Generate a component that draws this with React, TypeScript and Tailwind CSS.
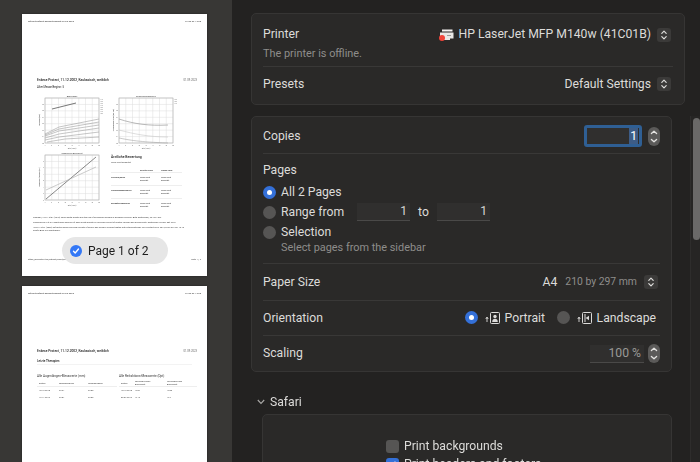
import React from "react";

const FONT = "font-['Roboto','Liberation_Sans',sans-serif]";

function Stepper({ tall }: { tall?: boolean }) {
  if (tall) {
    return (
      <div className="w-[12px] h-[19px] rounded-full bg-[#5b5a59] flex items-center justify-center shrink-0">
        <svg width="12" height="19" viewBox="0 0 12 19" fill="none" stroke="#e4e3e1" strokeWidth="1.3" strokeLinecap="round" strokeLinejoin="round">
          <path d="M3.4 6.6 6 4.2l2.6 2.4" />
          <path d="M3.4 12.4 6 14.8l2.6-2.4" />
        </svg>
      </div>
    );
  }
  return (
    <div className="w-[14px] h-[14px] rounded-[3px] bg-[#3b3a39] flex items-center justify-center shrink-0">
      <svg width="14" height="14" viewBox="0 0 14 14" fill="none" stroke="#dedddb" strokeWidth="1.2" strokeLinecap="round" strokeLinejoin="round">
        <path d="M4.8 5.400 7 3.200l2.200 2.200" />
        <path d="M4.8 8.600 7 10.800l2.200-2.200" />
      </svg>
    </div>
  );
}

function Radio({ on }: { on?: boolean }) {
  return on ? (
    <span className="w-[13px] h-[13px] rounded-full bg-[#3470d8] flex items-center justify-center shrink-0">
      <span className="w-[5px] h-[5px] rounded-full bg-white" />
    </span>
  ) : (
    <span className="w-[13px] h-[13px] rounded-full bg-[#565554] shrink-0" />
  );
}

function Divider() {
  return <div className="h-px bg-[#393837]" />;
}

function SmallField({ children, w }: { children: React.ReactNode; w: string }) {
  return (
    <div className={`${w} h-[18px] bg-[#302f2e] border-b border-[#4a4948] flex items-center justify-end pr-[3px] text-[#d6d5d3]`}>
      {children}
    </div>
  );
}

function OrientIcon({ landscape }: { landscape?: boolean }) {
  return (
    <svg width="16" height="14" viewBox="0 0 16 14" fill="none" className="shrink-0">
      <path d="M2 11V6.500M.8 8 2 6l1.200 2" stroke="#dcdbd9" strokeWidth="0.9" />
      <rect x="5.500" y="1.500" width="9" height="11" rx="1" stroke="#dcdbd9" strokeWidth="1" />
      {landscape ? (
        <>
          <path d="M8 3v8" stroke="#dcdbd9" strokeWidth="1" />
          <path d="M8.600 7l3.400-2.200v4.400z" fill="#dcdbd9" />
        </>
      ) : (
        <>
          <circle cx="10" cy="5.500" r="1.700" fill="#dcdbd9" />
          <path d="M7.200 11c0-2.400 1.200-3.200 2.800-3.200s2.800.8 2.800 3.200z" fill="#dcdbd9" />
        </>
      )}
    </svg>
  );
}

const TITLES = { length: "Augenlänge", growth: "Augenlängenzuwachs", sphere: "Sphärisches Äquivalent" };
const YLABELS = { length: "Augenlänge (mm)", growth: "Augenlängenzuwachs (mm/Jahr)", sphere: "Sphärisches Äquivalent (Dpt)" };

function Chart({ kind }: { kind: "length" | "growth" | "sphere" }) {
  const vert = [0, 1, 2, 3, 4, 5, 6, 7, 8].map((i) => (i * 54) / 8);
  const horiz = [0, 1, 2, 3, 4, 5, 6, 7].map((i) => (i * 45) / 7);
  return (
    <svg width="66" height="55" viewBox="-9 -2 66 55" className="shrink-0 overflow-visible">
      {vert.map((x) => (
        <line key={x} x1={x} x2={x} y1="0" y2="45" stroke="#dddddd" strokeWidth="0.5" />
      ))}
      {horiz.map((y) => (
        <line key={y} x1="0" x2="54" y1={y} y2={y} stroke="#dddddd" strokeWidth="0.5" />
      ))}
      <rect x="0" y="0" width="54" height="45" fill="none" stroke="#b0b0b0" strokeWidth="0.6" />
      {kind === "length" && (
        <g fill="none" stroke="#8d8d8d" strokeWidth="0.5">
          <path d="M7 11 31 5" stroke="#555" strokeWidth="0.8" />
          <path d="M0 36 14 29 54 21" />
          <path d="M0 37 14 31 54 24" />
          <path d="M0 38 14 33 54 27" />
          <path d="M0 40 14 36 54 30" />
          <path d="M0 42 14 39 54 34" />
          <path d="M2 44 20 41 54 39" />
        </g>
      )}
      {kind === "growth" && (
        <g fill="none" stroke="#a5a5a5" strokeWidth="0.6">
          <path d="M0 21C15 26 30 28 49 27" stroke="#8c8c8c" />
          <path d="M0 32C15 36 30 39 49 39" stroke="#c8c8c8" />
          <path d="M0 40C10 42 20 44 49 45" />
        </g>
      )}
      {kind === "sphere" && (
        <g fill="none" strokeWidth="0.6">
          <path d="M1 44 51 2" stroke="#555" strokeWidth="0.7" />
          <path d="M1 35 51 12" stroke="#aaa" />
        </g>
      )}
      <text x="27" y="-0.6" fontSize="2" textAnchor="middle" fill="#444">
        {TITLES[kind]}
      </text>
      <text x="27" y="50.500" fontSize="1.500" textAnchor="middle" fill="#666">
        Alter (Jahre)
      </text>
      {horiz.slice(1).map((y, i) => (
        <text key={y} x="-1" y={y + 0.6} fontSize="1.500" textAnchor="end" fill="#666">
          {kind === "sphere" ? `${i - 3}` : `${26 - i}`}
        </text>
      ))}
      {vert.map((x, i) => (
        <text key={x} x={x} y="47.500" fontSize="1.500" textAnchor="middle" fill="#666">
          {i * 2 + 4}
        </text>
      ))}
      <text transform="translate(-5 22) rotate(-90)" fontSize="1.500" textAnchor="middle" fill="#666">
        {YLABELS[kind]}
      </text>
      {kind !== "sphere" && (
        <g fontSize="1.300" fill="#777">
          {[2, 4, 6, 8, 10, 12, 14, 16].slice(0, kind === "length" ? 8 : 3).map((y, i) => (
            <text key={y} x="55.500" y={y}>
              {kind === "length" ? `P${(i + 1) * 10}` : `P${(i + 1) * 25}`}
            </text>
          ))}
        </g>
      )}
    </svg>
  );
}

function Tiny({ children, className = "" }: { children: React.ReactNode; className?: string }) {
  return <div className={`whitespace-nowrap ${className}`}>{children}</div>;
}

function PageHeader() {
  return (
    <div className="flex justify-between text-[2.400px] leading-[4px] text-[#333] px-[6px] pt-[6px]">
      <Tiny>geführt.geführt.gesamt.gesamt.22.02.2023</Tiny>
      <Tiny>01.09.23 12:30</Tiny>
    </div>
  );
}

function PageTitle() {
  return (
    <div className="flex justify-between items-center pl-[15px] pr-[10px]">
      <Tiny className="text-[3.250px] leading-[6px] text-[#222] font-medium">Enkese Protect, 11.12.2002, Kaukasisch, weiblich</Tiny>
      <Tiny className="text-[2.700px] leading-[6px] text-[#666]">01.09.2023</Tiny>
    </div>
  );
}

const REVIEW = ["Tierrund/Kurve", "Augenlängenzuwachs", "Refraktionszuwachs"];

function FirstPage() {
  return (
    <div className="relative w-[185px] h-[262px] bg-white shrink-0 shadow-[0_0_2px_rgba(0,0,0,0.4)]">
      <PageHeader />
      <div className="h-[53px]" />
      <PageTitle />
      <Tiny className="px-[15px] text-[2.800px] leading-[4px] mt-[2px] text-[#222]">Alter Messe Beginn: 5</Tiny>
      <div className="flex gap-[8px] pl-[14px] mt-[7px] h-[55px]">
        <Chart kind="length" />
        <Chart kind="growth" />
      </div>
      <div className="flex pl-[14px] mt-[2px]">
        <Chart kind="sphere" />
        <div className="ml-[9px] mt-[2px] w-[70px] text-[#444]">
          <Tiny className="text-[3.400px] leading-[5px] text-[#222] font-medium">Ärztliche Bewertung</Tiny>
          <Tiny className="text-[2.200px] leading-[5px]">Noch nicht bewertet</Tiny>
          <div className="grid grid-cols-[29px_21px_21px] text-[2.100px] leading-[3.200px] mt-[4px] text-[#333]">
            <span className="pb-[2.400px]" />
            <span className="font-semibold">Rechtes Auge</span>
            <span className="font-semibold">Linkes Auge</span>
            {REVIEW.map((label) => (
              <React.Fragment key={label}>
                <span className="pt-[2.500px] h-[13px] border-t border-[#eeeeee] font-semibold">{label}</span>
                <span className="pt-[2.500px] h-[13px] border-t border-[#eeeeee]">Noch nicht<br />bewertet</span>
                <span className="pt-[2.500px] h-[13px] border-t border-[#eeeeee]">Noch nicht<br />bewertet</span>
              </React.Fragment>
            ))}
          </div>
        </div>
      </div>
      <div className="pl-[11px] mt-[5px] text-[2.150px] leading-[3px] text-[#444]">
        <Tiny>Tideman, J.W.L. et al. (2018). Axial length growth and the risk of developing myopia in European children. Acta Ophthalmol, 96: 301-309.</Tiny>
        <Tiny className="mt-[2px]">Truckenbrod C et al. Longitudinal analysis of axial length growth in a German cohort of healthy children and adolescents. Ophthalmic Physiol Opt. 2021</Tiny>
        <Tiny className="mt-[2px]">Hsu CH et al. (2020) Refractive power and axial growth of school-age myopic children treated with orthokeratology. Eye Contact Lens. 2019;45:29-35. doi: 10.10</Tiny>
        <Tiny>Graefe Arch Clin Ophthalmol.</Tiny>
      </div>
      <div className="flex justify-between text-[2.200px] leading-[3px] text-[#444] px-[6px] mt-[26px]">
        <Tiny>https://eyeprotect.ch/patient/report/print</Tiny>
        <Tiny>Seite 1 / 2</Tiny>
      </div>
      {/* Selected-page pill */}
      <div className="absolute left-[40px] top-[223px] w-[106px] h-[27px] rounded-full bg-[#e6e6e6] flex items-center pl-[8px] gap-[6px]">
        <span className="w-[12px] h-[12px] rounded-full bg-[#3478f6] flex items-center justify-center">
          <svg width="8" height="8" viewBox="0 0 8 8" fill="none" stroke="white" strokeWidth="1.300" strokeLinecap="round" strokeLinejoin="round">
            <path d="M1.500 4.200 3.200 6 6.500 2" />
          </svg>
        </span>
        <span className="text-[12px] text-[#1d1d1d] whitespace-nowrap">Page 1 of 2</span>
      </div>
    </div>
  );
}

function SecondPage() {
  const cell = "text-[2.200px] leading-[3px] text-[#444]";
  return (
    <div className="w-[185px] h-[262px] bg-white shrink-0 shadow-[0_0_2px_rgba(0,0,0,0.4)]">
      <PageHeader />
      <div className="h-[52px]" />
      <PageTitle />
      <Tiny className="px-[15px] mt-[4.500px] text-[3px] leading-[5px] text-[#222] font-medium">Letzte Therapien</Tiny>
      <div className="mx-[15px] h-px bg-[#f3f3f3]" />
      <div className="flex px-[15px] mt-[9px] gap-[2px]">
        <div className="w-[80px]">
          <Tiny className="text-[3.100px] leading-[5px] text-[#333]">Alle Augenlängen-Messwerte (mm)</Tiny>
          <div className={`grid grid-cols-[20px_29px_29px] pl-[2px] mt-[3px] ${cell}`}>
            <span className="pb-[1px]">Datum</span>
            <span>RA Augenlänge</span>
            <span>LA Augenlänge</span>
            <span className="col-span-3 h-px bg-[#eeeeee] -ml-[2px] mb-[2px]" />
            <span>18.12.2018</span><span>23.61</span><span>23.86</span>
            <span className="col-span-3 h-[4px]" />
            <span>12.11.2019</span><span>23.81</span><span>23.86</span>
          </div>
        </div>
        <div className="w-[76px]">
          <Tiny className="text-[3.100px] leading-[5px] text-[#333]">Alle Refraktions-Messwerte (Dpt)</Tiny>
          <div className={`grid grid-cols-[14px_32px_30px] items-end pl-[2px] mt-[1px] ${cell}`}>
            <span className="pb-[1px]">Datum</span>
            <span>RA Sphärisches<br />Äquivalent</span>
            <span>LA Sphärisches<br />Äquivalent</span>
            <span className="col-span-3 h-px bg-[#eeeeee] -ml-[2px] mb-[2px]" />
            <span>18.12.2018</span><span>-0.87</span><span>-0.80</span>
            <span className="col-span-3 h-[4px]" />
            <span>06.07.2019</span><span>-0.12</span><span>-0.2</span>
          </div>
        </div>
      </div>
    </div>
  );
}

export default function App() {
  return (
    <div className={`${FONT} w-[700px] h-[462px] overflow-hidden flex bg-[#232221] text-[12.200px] text-[#dcdbd9]`}>
      {/* Page previews */}
      <aside className="w-[232px] h-full shrink-0 bg-[#383735] flex flex-col gap-[10px] pl-[22px] pt-[14px] overflow-hidden blur-[0.35px]">
        <FirstPage />
        <SecondPage />
      </aside>

      {/* Print options */}
      <main className="flex-1 min-w-0 flex flex-col pl-[19px] pt-[13px] overflow-hidden blur-[0.2px]">
        <section className="w-[434px] h-[92px] rounded-[5px] border border-[#363534] bg-[#2a2928] px-[11px] shrink-0">
          <div className="h-[33px] pt-[11px] flex justify-between items-start pr-[2px]">
            <span className="leading-[19px]">Printer</span>
            <div className="flex items-center gap-[6px] h-[19px]">
              <span className="relative w-[15px] h-[14px] mr-[-1px]">
                <svg width="15" height="14" viewBox="0 0 15 14">
                  <path d="M3 1.500h10.500v2H3z" fill="#f4f3f1" />
                  <path d="M1 4.500h13.500v6H11v1.500H4V10.500H1z" fill="#e9e8e6" />
                  <path d="M8 7.500h4" stroke="#888" strokeWidth="0.8" />
                </svg>
                <span className="absolute left-0 top-[7px] w-[6px] h-[6px] rounded-full bg-[#f0453a]" />
              </span>
              <span className="whitespace-nowrap">HP LaserJet MFP M140w (41C01B)</span>
              <Stepper />
            </div>
          </div>
          <div className="text-[10.900px] leading-[13px] text-[#8e8d8b]">The printer is offline.</div>
          <div className="mt-[6px]"><Divider /></div>
          <div className="h-[35px] flex justify-between items-center pr-[2px]">
            <span>Presets</span>
            <div className="flex items-center gap-[6px]">
              <span>Default Settings</span>
              <Stepper />
            </div>
          </div>
        </section>

        <div className="mt-[11px] flex-1 min-h-0 flex">
          <div className="w-[439px] shrink-0">
            <section className="w-[421px] h-[256px] rounded-[5px] border border-[#363534] bg-[#2a2928] px-[11px]">
              <div className="h-[36px] pt-[2px] flex items-center justify-between">
                <span>Copies</span>
                <div className="flex items-center gap-[6px]">
                  <div className="w-[58px] h-[22px] rounded-[3px] border-[3px] border-[#2f5f94] bg-[#302f2e] flex items-center justify-end pr-[1px]">
                    <span className="bg-[#3d5c86] text-white px-[1px] leading-[16px]">1</span>
                  </div>
                  <Stepper tall />
                </div>
              </div>
              <Divider />
              <div className="mt-[8px] leading-[17px]">Pages</div>
              <div className="mt-[3px] flex items-center gap-[5px] h-[20px]">
                <Radio on />
                <span>All 2 Pages</span>
              </div>
              <div className="flex items-center gap-[5px] h-[20px]">
                <Radio />
                <span className="w-[71px]">Range from</span>
                <SmallField w="w-[53px]">1</SmallField>
                <span className="w-[17px] text-center">to</span>
                <SmallField w="w-[53px]">1</SmallField>
              </div>
              <div className="flex items-center gap-[5px] h-[20px]">
                <Radio />
                <span>Selection</span>
              </div>
              <div className="pl-[18px] text-[10.900px] leading-[13px] -mt-[1px] text-[#8e8d8b]">Select pages from the sidebar</div>
              <div className="mt-[9px]"><Divider /></div>
              <div className="h-[36px] flex items-center justify-between pr-[2px]">
                <span>Paper Size</span>
                <div className="flex items-center">
                  <span>A4</span>
                  <span className="ml-[8px] mr-[7px] text-[10.400px] text-[#8e8d8b]">210 by 297 mm</span>
                  <Stepper />
                </div>
              </div>
              <Divider />
              <div className="h-[34px] flex items-center justify-between pr-[4px]">
                <span>Orientation</span>
                <div className="flex items-center">
                  <Radio on />
                  <span className="ml-[7px] mr-[4px]"><OrientIcon /></span>
                  <span className="w-[52px]">Portrait</span>
                  <Radio />
                  <span className="ml-[7px] mr-[4px]"><OrientIcon landscape /></span>
                  <span>Landscape</span>
                </div>
              </div>
              <Divider />
              <div className="h-[35px] flex items-center justify-between">
                <span>Scaling</span>
                <div className="flex items-center gap-[4px]">
                  <SmallField w="w-[54px]"><span className="text-[#9a9997]">100 %</span></SmallField>
                  <Stepper tall />
                </div>
              </div>
            </section>

            <div className="mt-[20px] h-[18px] pt-[2px] flex items-center pl-[6px] gap-[5px]">
              <svg width="8" height="6" viewBox="0 0 8 6" fill="none" stroke="#a9a8a6" strokeWidth="1.100">
                <path d="M.8 1 4 4.400 7.200 1" />
              </svg>
              <span>Safari</span>
            </div>
            <section className="ml-[11px] mt-[4px] w-[410px] h-[120px] rounded-[5px] border border-[#363534] bg-[#2a2928] pt-[22px] pl-[123px]">
              <div className="flex items-center gap-[5px] h-[18px]">
                <span className="w-[13px] h-[13px] rounded-[3px] bg-[#565554]" />
                <span>Print backgrounds</span>
              </div>
              <div className="flex items-center gap-[5px] h-[18px]">
                <span className="w-[13px] h-[13px] rounded-[3px] bg-[#3470d8] flex items-center justify-center">
                  <svg width="9" height="9" viewBox="0 0 9 9" fill="none" stroke="white" strokeWidth="1.500">
                    <path d="M1.500 4.800 3.600 7 7.500 1.800" />
                  </svg>
                </span>
                <span>Print headers and footers</span>
              </div>
            </section>
          </div>

          {/* Scrollbar */}
          <div className="w-[10px] h-full border-l border-[#2e2d2c] bg-[#262524] ml-auto pl-[2px] pt-[2px]">
            <div className="w-[7px] h-[122px] rounded-full bg-[#6a6968]" />
          </div>
        </div>
      </main>
    </div>
  );
}
